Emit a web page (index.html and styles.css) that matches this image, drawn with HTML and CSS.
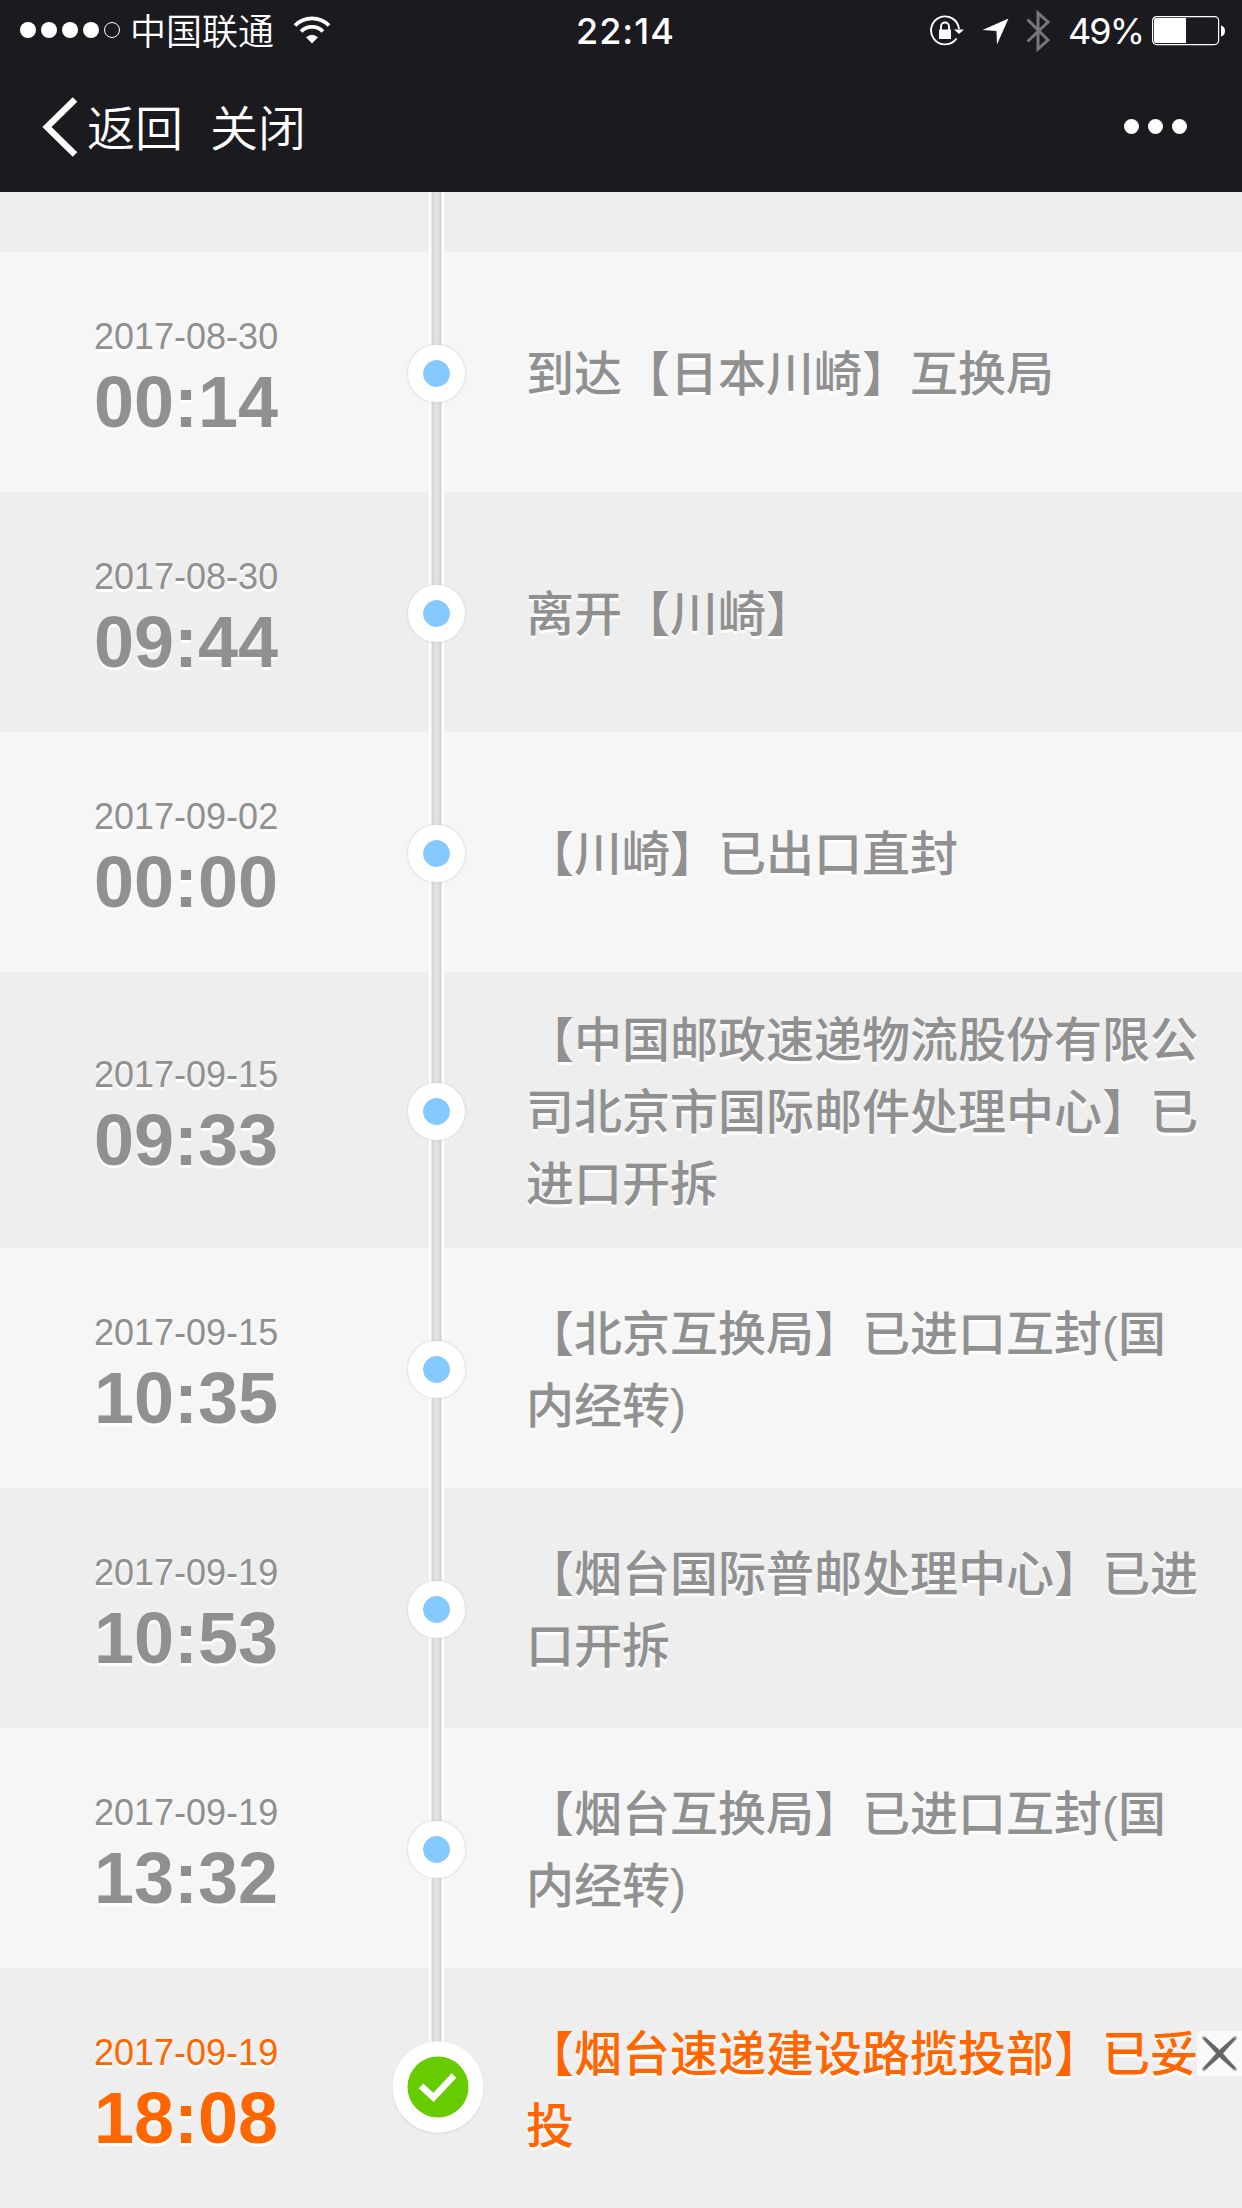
FILE: index.html
```html
<!DOCTYPE HTML>
<html lang="zh-CN">
<head>
<meta charset="utf-8">
<title>物流跟踪</title>
<link rel="stylesheet" href="styles.css">
</head>

<body>
<div class="header">
<div class="status">
<div class="status-left">
<svg class="signal" width="94" height="18" viewBox="0 0 94 18"><g fill="#fff"><circle cx="9" cy="9" r="8"/><circle cx="30" cy="9" r="8"/><circle cx="51" cy="9" r="8"/><circle cx="72" cy="9" r="8"/></g><circle cx="93" cy="9" r="7.5" fill="none" stroke="#fff"/></svg>
<span class="carrier">中国联通</span>
<svg class="wifi" width="38" height="28" viewBox="0 0 38 28"><g fill="none" stroke="#fff" stroke-width="3.8"><path d="M2 9.5a24 24 0 0 1 34 0"/><path d="M8 15.500a15.600 15.600 0 0 1 22 0"/></g><path d="M19 27.500l-6-6.200q6-5 12 0z" fill="#fff"/></svg>
</div>
<div class="clock">22:14</div>
<div class="status-right">
<svg class="lock" width="36" height="32" viewBox="0 0 36 32"><path d="M27.500 23.500A14 14 0 1 1 30 14" fill="none" stroke="#fff" stroke-width="1.900"/><path d="M25 14.500h10l-5 4.500z" fill="#fff"/><path d="M10 14.500h12v9.500H10z" fill="#fff"/><path d="M12 15v-3.500a4 4 0 0 1 8 0V15" fill="none" stroke="#fff" stroke-width="1.900"/></svg>
<svg class="arrow" width="27" height="27" viewBox="0 0 27 27"><path d="M26.500.500L15 26.500l-.5-13.500L.500 12z" fill="#fff"/></svg>
<svg class="bluetooth" width="24" height="42" viewBox="0 0 24 42"><path d="M1.500 9.500L22 30 12 39V3l10 9L1.500 31.500" fill="none" stroke="#77767b" stroke-width="3"/></svg>
<span class="percent">49%</span>
<svg class="battery" width="74" height="30" viewBox="0 0 74 30"><rect x=".6" y=".6" width="66" height="28" rx="4" fill="none" stroke="#fff" stroke-width="1.200"/><path d="M4 2h30v25H4a2 2 0 0 1-2-2V4a2 2 0 0 1 2-2z" fill="#fff"/><path d="M69 9.500q4 1 4 5.500t-4 5.500z" fill="#fff"/></svg>
</div>
</div>
<div class="nav">
<svg class="back" width="36" height="60" viewBox="0 0 36 60"><path d="M33 2.500L5 30l28 27.500" fill="none" stroke="#fff" stroke-width="6.500"/></svg>
<a class="nav-back">返回</a>
<a class="nav-close">关闭</a>
<div class="more"><i></i><i></i><i></i></div>
</div>
</div>

<ul class="track">
<li class="first"><div class="time"></div><div class="node"></div><p></p></li>
<li><div class="time"><em>2017-08-30</em><b>00:14</b></div><div class="node"><i></i></div><p>到达【日本川崎】互换局</p></li>
<li><div class="time"><em>2017-08-30</em><b>09:44</b></div><div class="node"><i></i></div><p>离开【川崎】</p></li>
<li><div class="time"><em>2017-09-02</em><b>00:00</b></div><div class="node"><i></i></div><p>【川崎】已出口直封</p></li>
<li><div class="time"><em>2017-09-15</em><b>09:33</b></div><div class="node"><i></i></div><p>【中国邮政速递物流股份有限公司北京市国际邮件处理中心】已进口开拆</p></li>
<li><div class="time"><em>2017-09-15</em><b>10:35</b></div><div class="node"><i></i></div><p>【北京互换局】已进口互封(国内经转)</p></li>
<li><div class="time"><em>2017-09-19</em><b>10:53</b></div><div class="node"><i></i></div><p>【烟台国际普邮处理中心】已进口开拆</p></li>
<li><div class="time"><em>2017-09-19</em><b>13:32</b></div><div class="node"><i></i></div><p>【烟台互换局】已进口互封(国内经转)</p></li>
<li class="last"><div class="time"><em>2017-09-19</em><b>18:08</b></div><div class="node"><svg class="done" width="96" height="96" viewBox="0 0 96 96"><circle cx="48" cy="48" r="46.500" fill="#e3e3e3"/><circle cx="48" cy="47" r="45.500" fill="#fff"/><circle cx="48" cy="47" r="30.500" fill="#6c0"/><path d="M31 46l12.500 11.500L64 35.500" fill="none" stroke="#fff" stroke-width="6.500"/></svg></div><p>【烟台速递建设路揽投部】已妥投</p></li>
</ul>

<div class="close"><svg width="45" height="45" viewBox="0 0 45 45"><path d="M7 7l31 31M38 7L7 38" stroke="#aaa" stroke-width="4" stroke-linecap="round"/><path d="M8 6.500Q20 16 22.500 19 25 16 37 6.500L38.500 8Q29 19 26 22.500 29 26 38.500 37L37 38.500Q25 29 22.500 26 20 29 8 38.500L6.500 37Q16 26 19 22.500 16 19 6.500 8z" fill="#666"/></svg></div>
</body>
</html>
```
FILE: styles.css
```css
body{margin:0;width:1242px;height:2208px;overflow:hidden;background:#eee;font-family:"Liberation Sans","Noto Sans CJK SC",sans-serif;}
ul, p{margin:0;padding:0;list-style-type:none;}
em, i{font-style:normal;}
svg{display:block;flex:none;}

.header{height:192px;background:#1b1a1f;color:#fff;}
.status{display:grid;grid-template-columns:1fr 100px 1fr;height:62px;}
.status-left, .status-right{display:flex;align-items:center;}
.status-left{padding-left:19px;}
.signal{overflow:visible;margin-bottom:2px;}
.carrier{margin:0 0 4px 17px;font:350 36px/58px "Noto Sans CJK SC",sans-serif;}
.wifi{margin:0 0 3px 19px;}
.clock{padding-left:5px;font:500 36px/62px Inter,sans-serif;text-align:center;white-space:nowrap;letter-spacing:1px;}
.status-right{justify-content:flex-end;padding-right:16px;}
.arrow{margin-left:17px;}
.bluetooth{margin-left:17px;}
.percent{margin:0 9px 0 18px;font:400 36px/62px Inter,sans-serif;letter-spacing:-2px;}
.lock, .battery{margin-bottom:1px;}

.nav{display:flex;align-items:center;height:130px;padding:0 55px 0 42px;font:350 48px/126px "Noto Sans CJK SC",sans-serif;}
.nav a{margin-bottom:4px;}
.back{margin-bottom:1px;}
.nav .nav-back{margin-left:9px;}
.nav .nav-close{margin-left:27px;}
.more{display:flex;gap:9px;margin:0 0 1px auto;}
.more i{width:15px;height:15px;border-radius:50%;background:#fff;}

.track li{display:flex;align-items:center;box-sizing:border-box;min-height:240px;background:#f6f6f6;color:#909090;text-shadow:0 3px 0 #fff;}
.track li:nth-child(odd){background:#eee;}
.track .first{min-height:60px;}
.time{width:296px;padding:4px 0 0 94px;}
.time em, .time b{display:block;}
.time em{font-size:36px;line-height:55px;}
.time b{font-size:72px;line-height:76px;}
.node{display:flex;align-items:center;justify-content:center;align-self:stretch;width:96px;background:linear-gradient(90deg,#fff 2px,#d2d2d0 3px,#e3e3e1 6px,#e1e1df 9px,#cfcfcd 12px,#fff 13px) 39px 0/15px 100% no-repeat;}
.node i{width:27px;height:27px;margin:3px 4px 0 0;border:15px solid #fff;border-radius:50%;background:#84c9ff;background-clip:padding-box;box-shadow:0 0 3px #ccc;}
.track p{width:680px;margin-left:40px;padding:33px 0 27px;font:500 48px/72px "Liberation Sans","Noto Sans CJK SC",sans-serif;}
.track .first p{padding:0;}
.track .last{color:#f60;}
.last .node{background-size:15px 76px;}

.close{position:absolute;left:1197px;top:2031px;width:45px;height:45px;background:#fafafa;}
```
